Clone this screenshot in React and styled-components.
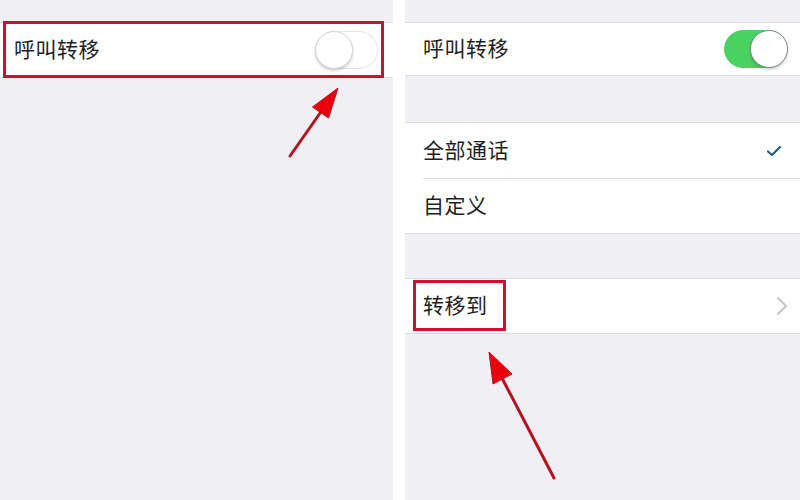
import React from 'react';
import styled, { createGlobalStyle } from 'styled-components';

const GlobalStyle = createGlobalStyle`
  html, body {
    margin: 0;
    padding: 0;
    background: #fff;
  }
  body {
    font-family: "Noto Sans CJK SC", "Noto Sans", sans-serif;
  }
`;

const Page = styled.div`
  position: relative;
  width: 800px;
  height: 500px;
  display: flex;
  gap: 12px;
  background: #fff;
  overflow: hidden;
`;

const Panel = styled.div`
  width: ${(p) => p.width}px;
  height: 100%;
  background: #f0eff4;
  display: flex;
  flex-direction: column;
  padding-top: ${(p) => p.top}px;
  box-sizing: border-box;
`;

const Group = styled.div`
  background: #fff;
  border-top: 1px solid #dcdce0;
  border-bottom: 1px solid #dcdce0;
  margin-bottom: ${(p) => p.after || 0}px;
`;

const Row = styled.div`
  position: relative;
  height: ${(p) => p.h || 54}px;
  display: flex;
  align-items: center;
  justify-content: space-between;
  padding: 0 ${(p) => p.right || 14}px 0 ${(p) => p.left || 18}px;
  box-sizing: border-box;
  & + & {
    border-top: 1px solid #dcdce0;
    margin-left: ${(p) => p.left || 18}px;
    padding-left: 0;
  }
`;

const Label = styled.span`
  font-size: 21px;
  line-height: 1;
  margin-top: -3px;
  color: #1e1e1e;
  letter-spacing: 0.5px;
`;

const Track = styled.div`
  position: relative;
  width: 63px;
  height: 38px;
  border-radius: 19px;
  box-sizing: border-box;
  background: ${(p) => (p.on ? '#4ad261' : '#fff')};
  border: 1.5px solid ${(p) => (p.on ? '#4ad261' : '#e4e4e8')};
`;

const Knob = styled.div`
  position: absolute;
  top: -1.5px;
  ${(p) => (p.on ? 'right: -1.5px;' : 'left: -1.5px;')}
  width: 38px;
  height: 38px;
  border-radius: 50%;
  box-sizing: border-box;
  background: #fff;
  border: 1.5px solid ${(p) => (p.on ? '#7d8a84' : '#d4d4d8')};
  box-shadow: 0 2px 3px rgba(0, 0, 0, 0.18);
`;

const Highlight = styled.div`
  position: absolute;
  left: ${(p) => p.x}px;
  top: ${(p) => p.y}px;
  width: ${(p) => p.w}px;
  height: ${(p) => p.h}px;
  border: 3px solid #cc1030;
  box-sizing: border-box;
  pointer-events: none;
`;

const Overlay = styled.svg`
  position: absolute;
  left: 0;
  top: 0;
  width: 800px;
  height: 500px;
  pointer-events: none;
`;

const Toggle = ({ on }) => (
  <Track on={on ? 1 : 0}>
    <Knob on={on ? 1 : 0} />
  </Track>
);

const Check = () => (
  <svg width="16" height="12" viewBox="0 0 16 12">
    <path d="M2 6.5 L6 10 L14 2" fill="none" stroke="#2a5d86" strokeWidth="2.2" strokeLinecap="round" strokeLinejoin="round" />
  </svg>
);

const Chevron = () => (
  <svg width="12" height="20" viewBox="0 0 12 20">
    <path d="M2 2 L10 10 L2 18" fill="none" stroke="#c4c4c9" strokeWidth="2" strokeLinecap="round" strokeLinejoin="round" />
  </svg>
);

const Arrow = ({ tail, tip, base1, base2 }) => (
  <g>
    <line x1={tail[0]} y1={tail[1]} x2={(base1[0] + base2[0]) / 2} y2={(base1[1] + base2[1]) / 2} stroke="#b3141f" strokeWidth="3" strokeLinecap="round" />
    <polygon points={`${tip[0]},${tip[1]} ${base1[0]},${base1[1]} ${base2[0]},${base2[1]}`} fill="#e8000c" stroke="#c30d18" strokeWidth="1" strokeLinejoin="round" />
  </g>
);

export default function App() {
  return (
    <>
      <GlobalStyle />
      <Page>
        <Panel width={393} top={22}>
          <Group>
            <Row h={54} left={14} right={15}>
              <Label>呼叫转移</Label>
              <Toggle />
            </Row>
          </Group>
        </Panel>

        <Panel width={395} top={22}>
          <Group after={46}>
            <Row h={52} left={18} right={13}>
              <Label>呼叫转移</Label>
              <Toggle on />
            </Row>
          </Group>
          <Group after={44}>
            <Row h={55} left={18} right={18}>
              <Label>全部通话</Label>
              <Check />
            </Row>
            <Row h={55} left={18} right={18}>
              <Label>自定义</Label>
            </Row>
          </Group>
          <Group>
            <Row h={54} left={18} right={12}>
              <Label>转移到</Label>
              <Chevron />
            </Row>
          </Group>
        </Panel>

        <Highlight x={3} y={21} w={381} h={57} />
        <Highlight x={413} y={280} w={93} h={51} />

        <Overlay viewBox="0 0 800 500">
          <Arrow tail={[290, 156]} tip={[338, 88]} base1={[328.5, 118]} base2={[312.5, 107]} />
          <Arrow tail={[554, 478]} tip={[489, 352]} base1={[512, 374]} base2={[493, 384]} />
        </Overlay>
      </Page>
    </>
  );
}
